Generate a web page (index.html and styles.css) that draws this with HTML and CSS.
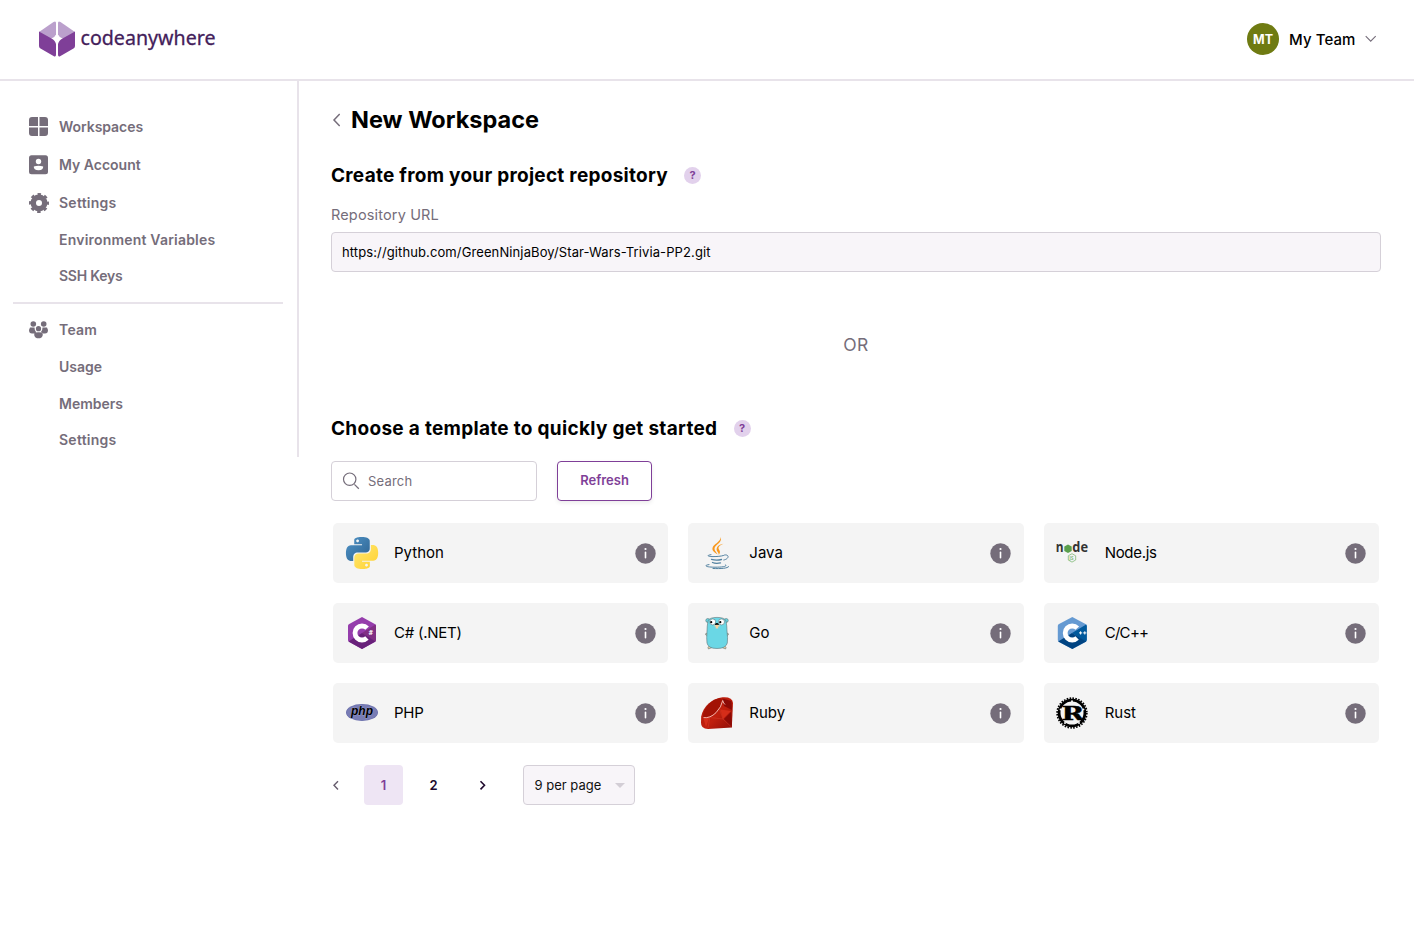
FILE: index.html
```html
<!DOCTYPE html>
<html lang="en">
<head>
<meta charset="utf-8">
<title>New Workspace</title>
<link rel="stylesheet" href="styles.css">
</head>
<body>
<svg class="defs" aria-hidden="true">
  <symbol id="info" viewBox="0 0 21 21"><circle cx="10.5" cy="10.5" r="10.2" fill="#756d7a"/><circle cx="10.5" cy="6" r="1.100" fill="#fff"/><rect x="9.700" y="8.600" width="1.600" height="7" rx=".8" fill="#fff"/></symbol>
</svg>
<header class="header">
  <svg class="logo" viewBox="0 0 180 40" width="180" height="40">
    <path d="M1 12 15.500 2Q18 .5 18 3V14.500Q17 17 13.500 18.500L11 19Z" fill="#bba0cc"/>
    <path d="M37 12 22.500 2Q20 .5 20 3V14.500Q21 17 24.500 18.500L27 19Z" fill="#bba0cc"/>
    <path d="M1 11.500 13.500 18.500Q17 20 18 24V34.500Q18 37.500 15.500 36L2.500 28.500Q1 27.500 1 26Z" fill="#7f3f98"/>
    <path d="M37 11.500 24.500 18.500Q21 20 20 24V34.500Q20 37.500 22.500 36L35.500 28.500Q37 27.500 37 26Z" fill="#7f3f98"/>
    <text class="logo-text" x="42.500" y="25" textLength="135" lengthAdjust="spacingAndGlyphs">codeanywhere</text>
  </svg>
  <div class="account">
    <span class="avatar">MT</span>
    <span class="account-name">My Team</span>
    <svg width="12" height="8" viewBox="0 0 12 8"><path d="M.7 1.200 5.700 6.200 10.700 1.200" fill="none" stroke="#756d7a" stroke-width="1.100"/></svg>
  </div>
</header>
<div class="body">
  <nav class="sidebar">
    <a class="item"><svg class="nav-icon" viewBox="0 0 20 20"><path d="M3 0H9V9H0V3Q0 0 3 0ZM10.500 0H16Q19 0 19 3V9H10.500ZM0 10.500H9V19H3Q0 19 0 16ZM10.500 10.500H19V16Q19 19 16 19H10.500Z"/></svg><span class="t-workspaces">Workspaces</span></a>
    <a class="item"><svg class="nav-icon" viewBox="0 0 20 20"><rect width="19" height="19" y=".2" rx="2.500"/><circle cx="9.500" cy="6.500" r="2.700" fill="#fff"/><path d="M4.800 11.500Q9.500 10 14.200 11.500 14.500 15.200 9.500 15.200 4.500 15.200 4.800 11.500Z" fill="#fff"/></svg><span>My Account</span></a>
    <a class="item"><svg class="nav-icon" viewBox="0 0 20 20"><circle cx="10" cy="10" r="5.700" fill="none" stroke="#756d7a" stroke-width="5.400"/><circle cx="10" cy="10" r="9" fill="none" stroke="#756d7a" stroke-width="2" stroke-dasharray="3.534 3.534" stroke-dashoffset="1.767"/></svg><span class="t-settings">Settings</span></a>
    <a class="item sub"><span class="t-env">Environment Variables</span></a>
    <a class="item sub"><span class="t-ssh">SSH Keys</span></a>
    <hr class="rule">
    <a class="item"><svg class="nav-icon" viewBox="0 0 20 20"><circle cx="4.300" cy="4" r="2.800"/><circle cx="14.700" cy="4" r="2.800"/><circle cx="9.500" cy="8.700" r="2.600"/><path d="M1 7.500H5.500Q5.500 10.500 7 12L5.800 13.500H3Q0 13.500 0 10ZM18 7.500H13.500Q13.500 10.500 12 12L13.200 13.500H16Q19 13.500 19 10ZM6 12.500Q9.500 11.800 13 12.500 14.800 15 12.500 17.500 9.500 19.200 6.500 17.500 4.200 15 6 12.500Z"/></svg><span class="t-settings">Team</span></a>
    <a class="item sub"><span>Usage</span></a>
    <a class="item sub"><span>Members</span></a>
    <a class="item sub"><span class="t-settings">Settings</span></a>
  </nav>
  <main class="main">
    <div class="title-row">
      <svg width="9" height="14" viewBox="0 0 9 14"><path d="M8.700 1 3 7 8.700 13" fill="none" stroke="#756d7a" stroke-width="1.500"/></svg>
      <h1 class="title">New Workspace</h1>
    </div>
    <div class="heading-row"><h2 class="heading t-create">Create from your project repository</h2><span class="help">?</span></div>
    <label class="label">Repository URL</label>
    <div class="repo">https://github.com/GreenNinjaBoy/Star-Wars-Trivia-PP2.git</div>
    <div class="or">OR</div>
    <div class="heading-row"><h2 class="heading t-choose">Choose a template to quickly get started</h2><span class="help">?</span></div>
    <div class="tools">
      <div class="search"><svg width="18" height="18" viewBox="0 0 18 18"><path d="M12.400 12.400 16.800 16.800" stroke="#756d7a" stroke-width="1.300"/><circle cx="7.700" cy="7.200" r="6.200" fill="none" stroke="#756d7a" stroke-width="1.200"/></svg><span>Search</span></div>
      <button class="refresh">Refresh</button>
    </div>
    <div class="grid">
      <div class="card">
        <svg class="lang" viewBox="0 0 24 24"><defs><linearGradient id="pb" x2="1" y2="1"><stop stop-color="#4f94c8"/><stop offset="1" stop-color="#2d6290"/></linearGradient><linearGradient id="py" x2="1" y2="1"><stop stop-color="#ffe873"/><stop offset="1" stop-color="#ffd02f"/></linearGradient></defs>
        <path fill="url(#pb)" d="M14.25.18l.9.2.73.26.59.3.45.32.34.34.25.34.16.33.1.3.04.26.02.2-.01.13V8.500l-.05.63-.13.55-.21.46-.26.38-.3.31-.33.25-.35.19-.35.14-.33.1-.3.07-.26.04-.21.02H8.770l-.69.05-.59.14-.5.22-.41.27-.33.32-.27.35-.2.36-.15.37-.1.35-.07.32-.04.27-.02.21v3.060H3.170l-.21-.03-.28-.07-.32-.12-.35-.18-.36-.26-.36-.36-.35-.46-.32-.59-.28-.73-.21-.88-.14-1.050-.05-1.230.06-1.220.16-1.040.24-.87.32-.71.36-.57.4-.44.42-.33.42-.24.4-.16.36-.1.32-.05.24-.01h.16l.06.01h8.160v-.83H6.180l-.01-2.750-.02-.37.05-.34.11-.31.17-.28.25-.26.31-.23.38-.2.44-.18.51-.15.58-.12.64-.1.71-.06.77-.04.84-.02 1.270.05zm-6.300 1.980l-.23.33-.08.41.08.41.23.34.33.22.41.09.41-.09.33-.22.23-.34.08-.41-.08-.41-.23-.33-.33-.22-.41-.09-.41.09z"/>
        <path fill="url(#py)" d="M21.100 6.110l.28.06.32.12.35.18.36.27.36.35.35.47.32.59.28.73.21.88.14 1.040.05 1.230-.06 1.230-.16 1.040-.24.86-.32.71-.36.57-.4.45-.42.33-.42.24-.4.16-.36.09-.32.05-.24.02-.16-.01h-8.220v.82h5.840l.01 2.760.02.36-.05.34-.11.31-.17.29-.25.25-.31.24-.38.2-.44.17-.51.15-.58.13-.64.09-.71.07-.77.04-.84.01-1.270-.04-1.070-.14-.9-.2-.73-.25-.59-.3-.45-.33-.34-.34-.25-.34-.16-.33-.1-.3-.04-.25-.02-.2.01-.13v-5.340l.05-.64.13-.54.21-.46.26-.38.3-.32.33-.24.35-.2.35-.14.33-.1.3-.06.26-.04.21-.02.13-.01h5.840l.69-.05.59-.14.5-.21.41-.28.33-.32.27-.35.2-.36.15-.36.1-.35.07-.32.04-.28.02-.21V6.070h2.090l.14.01zm-6.470 14.250l-.23.33-.08.41.08.41.23.33.33.23.41.08.41-.08.33-.23.23-.33.08-.41-.08-.41-.23-.33-.33-.23-.41-.08-.41.08z"/></svg>
        <span class="name">Python</span><svg class="info"><use href="#info"/></svg>
      </div>
      <div class="card">
        <svg class="lang" viewBox="0 0 32 32"><path fill="#f8981d" d="M19.500 0C22 5.500 13.500 8 13.500 11.700c0 2.200 2 3.300 3.200 5.800-3.200-2-5.800-3.700-5.200-6.500C12.300 7 20 5 19.500 0ZM22.500 6.700c-5 2-5.800 3.800-4.200 6.300 1.400 2.200.3 3.800-.6 5 .7-2.300-2.700-3.300-2-6.500.7-3 3.800-4.300 6.800-4.800Z"/><g fill="none" stroke="#5382a1" stroke-linecap="round"><path stroke-width="1" d="M10 17.700C5.500 18.300 6 19.600 12 19.600 16 19.600 20 19.300 22.500 18.500"/><path stroke-width="1" d="M23.500 18C28.500 17 28.500 22 22.800 23"/><path stroke-width="1.300" d="M10.500 22.300Q15 23.700 20.500 22.500M11.500 25.500Q15 27 19.500 25.900"/><path stroke-width="1" d="M8 27.600C2.500 28.300 4 30.200 14 30.200 24 30.200 26.500 29 24.300 27.700M12 31.500C20 31.800 26.500 31.500 27.800 29.500"/></g></svg>
        <span class="name">Java</span><svg class="info"><use href="#info"/></svg>
      </div>
      <div class="card">
        <svg class="lang" viewBox="0 0 32 32"><g class="node-text"><text x="-.3" y="12.300" textLength="7.800" lengthAdjust="spacingAndGlyphs" transform="translate(0 2.800)">n</text><text x="16.300" y="15.100" textLength="15.700" lengthAdjust="spacingAndGlyphs">de</text></g><path d="M12 7.500 15.700 9.600V14L12 16.100 8.300 14V9.600Z" fill="#5a9f4c"/><path d="M16 16.700 19.700 18.800V23L16 25.100 12.300 23V18.800Z" fill="none" stroke="#8cc084" stroke-width=".9"/><text class="node-js" x="13.200" y="22.800">JS</text></svg>
        <span class="name t-node">Node.js</span><svg class="info"><use href="#info"/></svg>
      </div>
      <div class="card">
        <svg class="lang" viewBox="0 0 32 32"><path fill="#953dac" d="M16 0 29.200 7.200Q30 7.800 30 9V23Q30 24.200 29.200 24.800L16 32 2.800 24.800Q2 24.200 2 23V9Q2 7.800 2.800 7.200Z"/><path fill="#813084" d="M29.500 7.500 16 16 29 25 30 23V9Z"/><path fill="#68217a" d="M2.500 24.500 16 16 29.500 24.500 16 32Z"/><circle cx="16" cy="16" r="7" fill="none" stroke="#fff" stroke-width="4.800" stroke-dasharray="33 11" stroke-dashoffset="-5.500"/><text class="sharp" x="22.600" y="17.800">#</text></svg>
        <span class="name t-csharp">C# (.NET)</span><svg class="info"><use href="#info"/></svg>
      </div>
      <div class="card">
        <svg class="lang" viewBox="0 0 32 32"><g stroke="#5a7478" stroke-width=".6"><path fill="#f6d2a2" d="M6.500 16Q3.500 16.500 4.800 18L6.500 18.500ZM25.500 16Q28.500 16.500 27.200 18L25.500 18.500ZM9 28.500Q5.500 30.500 7.500 32L11 30.500ZM23 28.500Q26.500 30.500 24.500 32L21 30.500Z"/><circle cx="6.800" cy="3.500" r="2" fill="#69d6e2"/><circle cx="25.200" cy="3.500" r="2" fill="#69d6e2"/><path fill="#6ad7e5" d="M7 4Q8 .4 16 .4T25 4Q26 9 26 14Q27 21 26.300 26 25 31.500 16 31.500T6 26Q5.400 21 6 14 6 9 7 4Z"/><circle cx="11.700" cy="4.900" r="3" fill="#fff"/><circle cx="20.500" cy="4.900" r="3" fill="#fff"/></g><circle cx="10.200" cy="5.200" r="1.100"/><circle cx="19.300" cy="5.200" r="1.100"/><ellipse cx="15.900" cy="7.200" rx="1.700" ry="1.200"/><path d="M13.500 8.200Q16 7.200 18.500 8.200V9.500H17.200V11.500H14.700V9.500H13.500Z" fill="#f6d2a2"/></svg>
        <span class="name">Go</span><svg class="info"><use href="#info"/></svg>
      </div>
      <div class="card">
        <svg class="lang" viewBox="0 0 32 32"><path fill="#659ad2" d="M16.300 0 30 7.200Q30.800 7.800 30.800 9V23Q30.800 24.200 30 24.800L16.300 32 2.600 24.800Q1.800 24.200 1.800 23V9Q1.800 7.800 2.600 7.200Z"/><path fill="#00599c" d="M30.200 7.500 16 16 29.700 25 30.800 23V9Z"/><path fill="#004482" d="M2.200 24.500 16 16 30.200 24.500 16.300 32Z"/><circle cx="16.200" cy="16" r="7" fill="none" stroke="#fff" stroke-width="4.800" stroke-dasharray="33 11" stroke-dashoffset="-5.500"/><path d="M23 15.900H26.200M24.600 14.300V17.500M27.200 15.900H30.400M28.800 14.300V17.500" stroke="#fff" stroke-width="1"/></svg>
        <span class="name t-cpp">C/C++</span><svg class="info"><use href="#info"/></svg>
      </div>
      <div class="card">
        <svg class="lang" viewBox="0 0 32 32"><ellipse cx="16" cy="15.500" rx="16" ry="8.500" fill="#6c71ad"/><ellipse cx="16" cy="15.500" rx="15.200" ry="7.800" fill="#787cb4"/><text class="php" x="5" y="18.400" textLength="22" lengthAdjust="spacingAndGlyphs">php</text></svg>
        <span class="name t-node">PHP</span><svg class="info"><use href="#info"/></svg>
      </div>
      <div class="card">
        <svg class="lang" viewBox="0 0 32 32"><defs><linearGradient id="rb" x1="0" y1="0" x2="1" y2="1"><stop stop-color="#b11b0c"/><stop offset=".55" stop-color="#c01f0d"/><stop offset="1" stop-color="#8d0d08"/></linearGradient></defs><path fill="url(#rb)" d="M21.500.2Q31.500-.5 32 6L30.800 30.500 7 32Q-.2 32 0 25.500L.2 19.500C2 9 12 1 21.500.2Z"/><path fill="#a31205" d="M3 14.500C7 6.500 13 1.800 18.500 1.300 23 1.300 21.500 8 17 13 11 20 3.500 22 2 19.500Q1.800 17.500 3 14.500Z"/><path fill="#d52d19" d="M2.500 21.500 8.500 20 5 30ZM19.500 12.500 30 14 22 22Z"/><path fill="#8c0a05" d="M30 15 30.800 30.500 23 22ZM21.500 1.500 30.500 4 31 13 23 9Z"/><path d="M18.500 12 22 22 30.500 30M8.800 20.500 7 31M9 20.500 22 22" fill="none" stroke="#d23c2b" stroke-width=".5"/><path d="M2.500 20.600Q9 21.500 15 15.700 20.500 10 21.700 3.500 22.500 6.500 24 7.500" fill="none" stroke="#f6c4bc" stroke-width=".9"/></svg>
        <span class="name">Ruby</span><svg class="info"><use href="#info"/></svg>
      </div>
      <div class="card">
        <svg class="lang" viewBox="0 0 32 32"><circle cx="16" cy="16" r="12.900" fill="none" stroke="#000" stroke-width="2.800"/><circle cx="16" cy="16" r="14.800" fill="none" stroke="#000" stroke-width="1.800" stroke-dasharray="1.550 1.356"/><g fill="#f4f4f4"><circle cx="16" cy="4.200" r="1"/><circle cx="4.600" cy="12.500" r="1"/><circle cx="27.400" cy="12.500" r="1"/><circle cx="9" cy="26" r="1"/><circle cx="23" cy="26" r="1"/></g><text class="rust" x="5.500" y="22.500" textLength="22.500" lengthAdjust="spacingAndGlyphs">R</text></svg>
        <span class="name">Rust</span><svg class="info"><use href="#info"/></svg>
      </div>
    </div>
    <div class="pager">
      <span class="page prev"><svg width="8" height="10" viewBox="0 0 8 10"><path d="M7 1.200 3 5.300 7 9.400" fill="none" stroke="#655b6c" stroke-width="1.400"/></svg></span>
      <span class="page current">1</span>
      <span class="page two">2</span>
      <span class="page next"><svg width="8" height="10" viewBox="0 0 8 10"><path d="M1.500 1.200 5.500 5.300 1.500 9.400" fill="none" stroke="#200a2e" stroke-width="1.600"/></svg></span>
      <div class="per-page"><span>9 per page</span><svg width="10" height="5" viewBox="0 0 10 5"><path d="M0 0H10L5 5Z" fill="#d3ced6"/></svg></div>
    </div>
  </main>
</div>
</body>
</html>
```

FILE: styles.css
```css
* { box-sizing: border-box; }
body { margin: 0; background: #fff; color: #000; font-family: Inter, "Open Sans", sans-serif; }
.defs { position: absolute; width: 0; height: 0; }
.header { display: flex; justify-content: space-between; align-items: flex-start; height: 81px; border-bottom: 2px solid #e8e3ea; padding: 20px 37px 0 38px; }
.logo { display: block; overflow: visible; }
.logo-text { font: 400 20.500px "Noto Sans", "Open Sans", sans-serif; fill: #43205a; stroke: #43205a; stroke-width: .3px; }
.account { display: flex; align-items: center; padding-top: 3px; }
.avatar { display: flex; align-items: center; justify-content: center; width: 32px; height: 32px; border-radius: 50%; background: #6f7b12; color: #fff; font-size: 12.500px; font-weight: 700; }
.account-name { margin: 2px 10px 0; font-size: 15px; font-weight: 500; letter-spacing: .1px; line-height: 20px; white-space: nowrap; width: 66px; }
.body { display: flex; align-items: flex-start; }
.sidebar { width: 299px; height: 376px; border-right: 2px solid #e8e3ea; padding: 27px 14px 0 13px; flex: none; }
.item { display: flex; align-items: center; gap: 11px; height: 38px; padding-left: 16px; color: #756d7a; font-size: 14px; font-weight: 600; white-space: nowrap; }
.item span { padding-bottom: 1px; }
.nav-icon { width: 20px; height: 20px; fill: #756d7a; margin-right: -1px; }
.sub { height: 36.500px; padding-left: 46px; }
.t-workspaces { letter-spacing: -.05px; }
.t-settings { letter-spacing: .25px; }
.t-env { letter-spacing: .2px; }
.item .t-ssh { letter-spacing: -.25px; padding-bottom: 2px; }
.rule { height: 2px; border: 0; background: #e8e3ea; margin: 7px 0; }
.main { width: 1082px; padding: 25px 0 0 32px; }
.title-row { display: flex; align-items: center; gap: 11px; height: 28px; }
.title { margin: 0; font-size: 23.500px; font-weight: 700; line-height: 28px; letter-spacing: 0; }
.heading-row { display: flex; align-items: center; gap: 17px; height: 24px; margin-top: 29px; }
.heading { margin: 0; padding-top: 2px; font-size: 19px; font-weight: 700; line-height: 24px; white-space: nowrap; }
.t-create { width: 336px; letter-spacing: .27px; }
.t-choose { width: 385.500px; letter-spacing: .3px; }
.help { display: flex; align-items: center; justify-content: center; width: 17px; height: 17px; border-radius: 50%; background: #e2d1ec; color: #7f3f98; font-size: 11px; font-weight: 700; }
.label { display: block; margin-top: 18px; height: 20px; line-height: 20px; font-size: 14.500px; letter-spacing: .15px; color: #756d7a; }
.repo { display: flex; align-items: center; margin-top: 7px; height: 40px; border: 1px solid #d5d0d8; border-radius: 4px; background: #f8f5f9; padding-left: 10px; font-size: 13px; letter-spacing: .11px; }
.or { margin-top: 62px; height: 20px; line-height: 21px; font-size: 17.500px; letter-spacing: .5px; color: #756d7a; text-align: center; }
.or + .heading-row { margin-top: 62px; }
.tools { display: flex; gap: 20px; margin-top: 21px; }
.search { display: flex; align-items: center; gap: 8px; width: 206px; height: 40px; border: 1px solid #d5d0d8; border-radius: 4px; padding-left: 10px; font-size: 13px; letter-spacing: .2px; color: #756d7a; }
.refresh { width: 95px; height: 40px; border: 1px solid #7f3f98; border-radius: 4px; background: #fff; color: #7f3f98; font: 600 13px Inter, sans-serif; box-shadow: 0 2px 4px rgba(0,0,0,.08); padding: 0 0 2px; }
.grid { display: grid; grid-template-columns: repeat(3, 1fr); gap: 20px; margin: 22px 2px 0; }
.card { display: flex; align-items: center; height: 60px; border-radius: 5px; background: #f4f4f4; padding: 0 12.500px 0 13px; }
.card:nth-child(3n) { padding-right: 13px; }
.lang { width: 32px; height: 32px; flex: none; overflow: visible; }
.card:nth-child(3n) .lang { margin: 0 1px 0 -1px; }
.name { margin-left: 16px; padding-bottom: 2px; flex: 1; font-size: 15px; }
.t-node { letter-spacing: -.3px; }
.t-csharp { letter-spacing: -.25px; }
.t-cpp { letter-spacing: -.7px; }
.info { width: 21px; height: 21px; }
.node-text { font: 700 14px "Open Sans", sans-serif; fill: #333; }
.node-js { font: 700 5px "Open Sans", sans-serif; fill: #8cc084; }
.sharp { font: 700 7px "Open Sans", sans-serif; fill: #fff; }
.php { font: italic 700 12px "Liberation Sans", sans-serif; fill: #000; stroke: #b7b9df; stroke-width: .5px; paint-order: stroke; }
.rust { font: 700 18px "DejaVu Serif", serif; fill: #000; stroke: #000; stroke-width: .5px; }
.pager { display: flex; align-items: center; margin-top: 22px; height: 40px; font-size: 13px; font-weight: 600; }
.page { display: flex; align-items: center; justify-content: center; height: 40px; width: 39px; border-radius: 4px; color: #200a2e; }
.prev { width: 8px; margin-right: 25px; }
.current { background: #eee5f4; color: #7f3f98; }
.two { margin-left: 11px; }
.next { width: 8px; margin: 0 36px 0 26px; }
.per-page { display: flex; align-items: center; justify-content: space-between; width: 112px; height: 40px; border: 1px solid #d5d0d8; border-radius: 4px; background: #f8f5f9; padding: 0 9px 0 10.500px; font-size: 13px; font-weight: 400; color: #111; }
```
